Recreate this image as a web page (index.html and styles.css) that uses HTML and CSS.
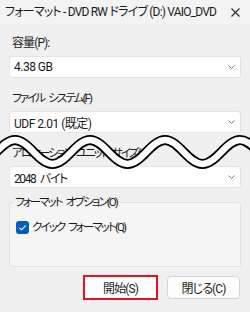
FILE: index.html
```html
<!DOCTYPE html>
<html lang="ja">
<head>
    <meta charset="utf-8">
    <link rel="stylesheet" href="styles.css">
</head>
<body>
    <div class="dialog">
        <!-- Barra de título -->
        <div class="titlebar">
            <span class="title">フォーマット - DVD RW ドライブ (D:) VAIO_DVD</span>
            <svg class="close" width="9" height="9" viewBox="0 0 9 9"><path d="M0.5 0.5 L8.5 8.5 M8.5 0.5 L0.5 8.5" stroke="#2b2b2b" stroke-width="1.1" fill="none"/></svg>
        </div>

        <div class="content">
            <div class="field">
                <div class="label">容量(P):</div>
                <div class="combo"><span>4.38 GB</span><svg class="chev" width="7" height="4" viewBox="0 0 7 4"><path d="M0.5 0.5 L3.5 3.5 L6.5 0.5" stroke="#7a7a7a" fill="none"/></svg></div>
            </div>
            <div class="field">
                <div class="label kana">ファイル システム(F)</div>
                <div class="combo"><span>UDF 2.01 (既定)</span><svg class="chev" width="7" height="4" viewBox="0 0 7 4"><path d="M0.5 0.5 L3.5 3.5 L6.5 0.5" stroke="#7a7a7a" fill="none"/></svg></div>
            </div>
            <div class="field">
                <div class="label kana">アロケーション ユニット サイズ(A)</div>
                <div class="combo"><span class="kana">2048 バイト</span><svg class="chev" width="7" height="4" viewBox="0 0 7 4"><path d="M0.5 0.5 L3.5 3.5 L6.5 0.5" stroke="#7a7a7a" fill="none"/></svg></div>
            </div>

            <!-- Opciones -->
            <fieldset class="group">
                <legend class="kana">フォーマット オプション(O)</legend>
                <div class="check">
                    <span class="box"><svg width="13" height="13" viewBox="0 0 13 13"><path d="M3.5 6.8 L5.6 8.8 L9.6 4.6" stroke="#ffffff" stroke-width="1.1" fill="none"/></svg></span>
                    <span class="kana">クイック フォーマット(Q)</span>
                </div>
            </fieldset>

            <div class="buttons">
                <div class="btn marked">開始(S)</div>
                <div class="btn">閉じる(C)</div>
            </div>
        </div>

        <!-- Línea de corte -->
        <svg class="tear" width="250" height="312" viewBox="0 0 250 312">
            <path d="M-22.5 164 C-8.84 164 1.34 140 15 140 S38.66 164 52.5 164 S76.34 140 90 140 S113.66 164 127.5 164 S151.34 140 165 140 S188.66 164 202.5 164 S226.34 140 240 140 S263.66 164 277.5 164" stroke="#000" stroke-width="10" fill="none"/>
            <path d="M-22.5 164 C-8.84 164 1.34 140 15 140 S38.66 164 52.5 164 S76.34 140 90 140 S113.66 164 127.5 164 S151.34 140 165 140 S188.66 164 202.5 164 S226.34 140 240 140 S263.66 164 277.5 164" stroke="#fff" stroke-width="6.5" fill="none"/>
        </svg>
    </div>
</body>
</html>
```

FILE: styles.css
```css
body {
    margin: 0;
    padding: 0;
    font-family: Roboto, "Noto Sans CJK JP", sans-serif;
    font-size: 12px;
    color: #1b1b1b;
    background-color: #f0f0f0;
    font-feature-settings: "palt";
}

.dialog {
    position: relative;
    width: 250px;
    height: 312px;
    overflow: hidden;
    background-color: #f0f0f0;
}

.titlebar {
    height: 24px;
    padding: 0 10px 0 5px;
    display: flex;
    align-items: center;
    justify-content: space-between;
    background-color: #f3f3f3;
}

.title {
    line-height: 16px;
    letter-spacing: -0.8px;
    white-space: nowrap;
}

.content {
    padding: 11px 9px 0 9px;
}

.field {
    margin-bottom: 12px;
}

.label {
    line-height: 16px;
    padding-left: 3px;
    margin-bottom: 5px;
    letter-spacing: -0.9px;
    white-space: nowrap;
}

/* texto con muchos kana: más estrecho */
.kana {
    font-size: 11.5px;
    letter-spacing: -1.9px;
    word-spacing: 3px;
}

.combo {
    height: 22px;
    box-sizing: border-box;
    background-color: #ffffff;
    border: 1px solid #e3e3e3;
    border-radius: 3px;
    display: flex;
    align-items: center;
    justify-content: space-between;
    padding: 0 5px 0 4px;
    letter-spacing: -0.5px;
}

.combo .kana {
    font-size: 12px;
    letter-spacing: -1.4px;
    word-spacing: 3px;
}

.group {
    margin: -6px 0 0 0;
    padding: 0 4px 32px 4px;
    border: 1px solid #e2e2e2;
    border-radius: 2px;
    background-color: #f5f5f5;
}

.group legend {
    padding: 0 1px;
    line-height: 16px;
}

.check {
    margin-top: 10px;
    display: flex;
    align-items: center;
    gap: 3px;
    line-height: 14px;
}

.box {
    width: 13px;
    height: 13px;
    border-radius: 3px;
    background-color: #005fb8;
    display: block;
    margin-left: 2px;
}

.box svg {
    display: block;
}

.buttons {
    margin-top: 8px;
    display: flex;
    justify-content: flex-end;
    align-items: center;
    gap: 9px;
    padding-right: 1px;
}

.btn {
    width: 73px;
    height: 23px;
    box-sizing: border-box;
    border: 1px solid #d4d4d4;
    border-radius: 4px;
    background-color: #fdfdfd;
    display: flex;
    align-items: center;
    justify-content: center;
    letter-spacing: -0.9px;
}

.btn.marked {
    width: 75px;
    height: 25px;
    border: 2px solid #e81123;
    border-radius: 0;
    background-color: #ffffff;
}

.tear {
    position: absolute;
    top: 0;
    left: 0;
    pointer-events: none;
}
```
